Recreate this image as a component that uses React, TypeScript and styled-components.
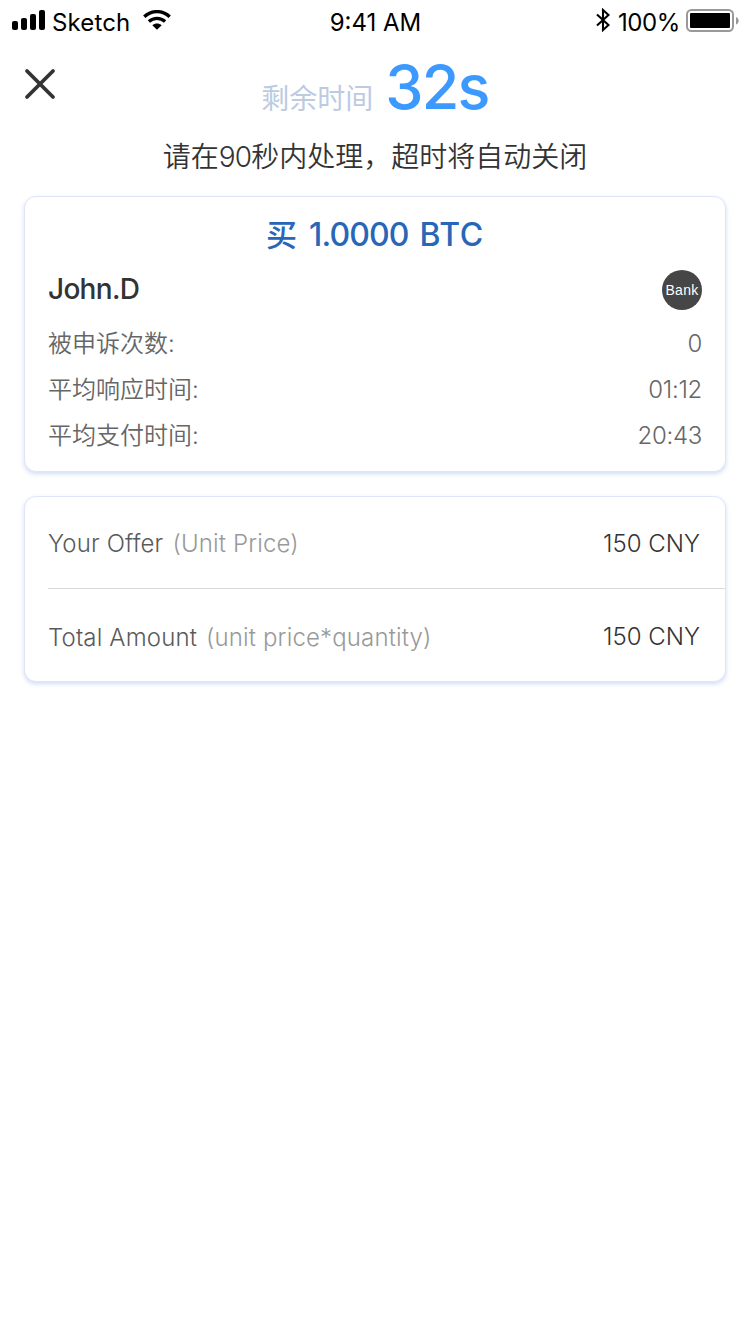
import React from "react";
import styled, { createGlobalStyle } from "styled-components";

const GlobalStyle = createGlobalStyle`
  * { box-sizing: border-box; }
  body {
    margin: 0;
    background: #fff;
    font-family: Inter, "Noto Sans CJK SC", sans-serif;
    color: #333;
  }
`;

const Screen = styled.main`
  width: 750px;
  height: 1334px;
  background: #fff;
  overflow: hidden;
`;

const StatusBar = styled.div`
  display: grid;
  grid-template-columns: 1fr auto 1fr;
  align-items: center;
  height: 40px;
  padding: 0 11px 0 12px;
  color: #000;
`;

const StatusGroup = styled.div<{ $end?: boolean }>`
  display: flex;
  align-items: center;
  justify-content: ${(p) => (p.$end ? "flex-end" : "flex-start")};
  height: 40px;
`;

const StatusText = styled.span<{ $spacing?: string }>`
  font-size: 24px;
  line-height: 30px;
  padding-top: 5px;
  white-space: nowrap;
  letter-spacing: ${(p) => p.$spacing ?? "0"};
`;

const Icon = styled.svg`
  display: block;
  flex: none;
`;

const Header = styled.header`
  display: grid;
  grid-template-columns: 64px 1fr 64px;
  height: 88px;
`;

const CloseButton = styled.button`
  width: 64px;
  height: 88px;
  padding: 0 0 0 24px;
  border: 0;
  background: none;
`;

const Countdown = styled.div`
  display: flex;
  justify-content: center;
  align-items: baseline;
  gap: 12px;
  line-height: 95px;
`;

const CountdownLabel = styled.span`
  font-size: 28px;
  color: #bccbe2;
`;

const CountdownValue = styled.span`
  font-size: 61px;
  font-weight: 450;
  letter-spacing: -1.8px;
  color: #3c9aff;
`;

const Notice = styled.p`
  margin: 0;
  height: 68px;
  padding-top: 9px;
  text-align: center;
  font-size: 28px;
  font-weight: 350;
  line-height: 40px;
  white-space: nowrap;
`;

const Digits = styled.span`
  letter-spacing: -0.9px;
`;

const Card = styled.section<{ $height: number }>`
  height: ${(p) => p.$height}px;
  margin: 0 24px 24px;
  border: 1px solid #dfe5f8;
  border-radius: 12px;
  background: #fff;
  box-shadow: 0 2px 4px rgba(84, 125, 220, 0.27);
`;

const TradeTitle = styled.h1`
  margin: 0;
  padding-top: 17px;
  height: 67px;
  display: flex;
  justify-content: center;
  gap: 12px;
  font-size: 32px;
  font-weight: 500;
  line-height: 42px;
  color: #2866b8;
`;

const TradeSide = styled.span`
  font-size: 31px;
`;

const TradeAmount = styled.span`
  display: flex;
  gap: 11px;
  font-weight: 450;
  letter-spacing: -0.9px;
`;

const Currency = styled.span`
  letter-spacing: 0.6px;
`;

const UserRow = styled.div`
  display: flex;
  align-items: flex-start;
  justify-content: space-between;
  height: 57px;
  padding: 6px 23px 0;
`;

const UserName = styled.strong`
  font-size: 28px;
  font-weight: 450;
  line-height: 38px;
  letter-spacing: -0.7px;
`;

const BankBadge = styled.span`
  display: flex;
  align-items: center;
  justify-content: center;
  width: 40px;
  height: 40px;
  border-radius: 50%;
  background: #464646;
  color: #fff;
  font-family: "Liberation Sans", sans-serif;
  font-size: 14px;
  letter-spacing: 0.3px;
`;

const StatRow = styled.div`
  display: flex;
  align-items: center;
  justify-content: space-between;
  height: 46px;
  padding: 0 23px;
  font-size: 24px;
  font-weight: 350;
  line-height: 34px;
  color: #666;
`;

const StatValue = styled.span`
  font-weight: 350;
  letter-spacing: -0.3px;
`;

const PriceRow = styled.div<{ $divided?: boolean }>`
  display: flex;
  align-items: center;
  justify-content: space-between;
  height: 92px;
  margin-left: 23px;
  padding: 3px 25px 0 0;
  border-bottom: ${(p) => (p.$divided ? "1px solid #d8d8d8" : "0")};
  font-size: 24px;
  line-height: 34px;
  color: #333;
`;

const PriceLabel = styled.span<{ $drop?: number }>`
  display: flex;
  gap: 9px;
  padding-top: ${(p) => p.$drop ?? 0}px;
  font-weight: 350;
  letter-spacing: 0.15px;
  color: #5a5a5a;
`;

const PriceHint = styled.span`
  color: #999;
`;

const PriceValue = styled.span`
  font-weight: 360;
`;

const SignalIcon = () => (
  <Icon width="34" height="20" viewBox="0 0 34 20">
    <rect x="0" y="11" width="6" height="9" rx="2" />
    <rect x="9" y="8" width="6" height="12" rx="2" />
    <rect x="18" y="4" width="6" height="16" rx="2" />
    <rect x="27" y="0" width="6" height="20" rx="2" />
  </Icon>
);

const WifiIcon = () => (
  <Icon width="28" height="20" viewBox="0 0 28 20">
    <path d="M1.3 6.8C8.5-.1 19.5-.1 26.7 6.8" fill="none" stroke="#000" strokeWidth="3.4" />
    <path d="M5.9 11.6c4.8-4.3 11.4-4.3 16.2 0" fill="none" stroke="#000" strokeWidth="3.3" />
    <path d="M9.3 15.2c2.8-2.3 6.6-2.3 9.4 0L14 19.8z" />
  </Icon>
);

const BluetoothIcon = () => (
  <Icon width="14" height="24" viewBox="0 0 14 24">
    <path d="M1 6.5 12.5 17 7 22V2l5.500 5L1 17.500" fill="none" stroke="#000" strokeWidth="2.1" />
  </Icon>
);

const BatteryIcon = () => (
  <Icon width="53" height="24" viewBox="0 0 53 24">
    <rect x="1" y="2" width="46" height="21" rx="4.5" fill="none" stroke="#999" strokeWidth="2" />
    <rect x="4" y="5" width="40" height="15" rx="1" />
    <path d="M50 9c3.6 1.4 3.6 6.200 0 7.600z" fill="#999" />
  </Icon>
);

const Spacer = styled.span<{ $w: number }>`
  flex: none;
  width: ${(p) => p.$w}px;
`;

const stats = [
  { label: "被申诉次数:", value: "0" },
  { label: "平均响应时间:", value: "01:12" },
  { label: "平均支付时间:", value: "20:43" },
];

export default function App() {
  return (
    <>
      <GlobalStyle />
      <Screen>
        <StatusBar>
          <StatusGroup>
            <SignalIcon />
            <Spacer $w={6} />
            <StatusText $spacing="0.15px">Sketch</StatusText>
            <Spacer $w={13} />
            <WifiIcon />
          </StatusGroup>
          <StatusText>9:41 AM</StatusText>
          <StatusGroup $end>
            <BluetoothIcon />
            <Spacer $w={8} />
            <StatusText $spacing="-0.4px">100%</StatusText>
            <Spacer $w={6} />
            <BatteryIcon />
          </StatusGroup>
        </StatusBar>
        <Header>
          <CloseButton aria-label="Close">
            <Icon width="32" height="32" viewBox="0 0 32 32">
              <path d="M3 3l26 26M29 3 3 29" stroke="#333" strokeWidth="3.8" strokeLinecap="round" />
            </Icon>
          </CloseButton>
          <Countdown>
            <CountdownLabel>剩余时间</CountdownLabel>
            <CountdownValue>32s</CountdownValue>
          </Countdown>
        </Header>
        <Notice>
          请在<Digits>90</Digits>秒内处理，超时将自动关闭
        </Notice>
        <Card $height={276}>
          <TradeTitle>
            <TradeSide>买</TradeSide>
            <TradeAmount>
              <span>1.0000</span>
              <Currency>BTC</Currency>
            </TradeAmount>
          </TradeTitle>
          <UserRow>
            <UserName>John.D</UserName>
            <BankBadge>Bank</BankBadge>
          </UserRow>
          {stats.map((s) => (
            <StatRow key={s.label}>
              <span>{s.label}</span>
              <StatValue>{s.value}</StatValue>
            </StatRow>
          ))}
        </Card>
        <Card $height={186}>
          <PriceRow $divided>
            <PriceLabel>
              Your Offer <PriceHint>(Unit Price)</PriceHint>
            </PriceLabel>
            <PriceValue>150 CNY</PriceValue>
          </PriceRow>
          <PriceRow>
            <PriceLabel $drop={3}>
              Total Amount <PriceHint>(unit price*quantity)</PriceHint>
            </PriceLabel>
            <PriceValue>150 CNY</PriceValue>
          </PriceRow>
        </Card>
      </Screen>
    </>
  );
}
